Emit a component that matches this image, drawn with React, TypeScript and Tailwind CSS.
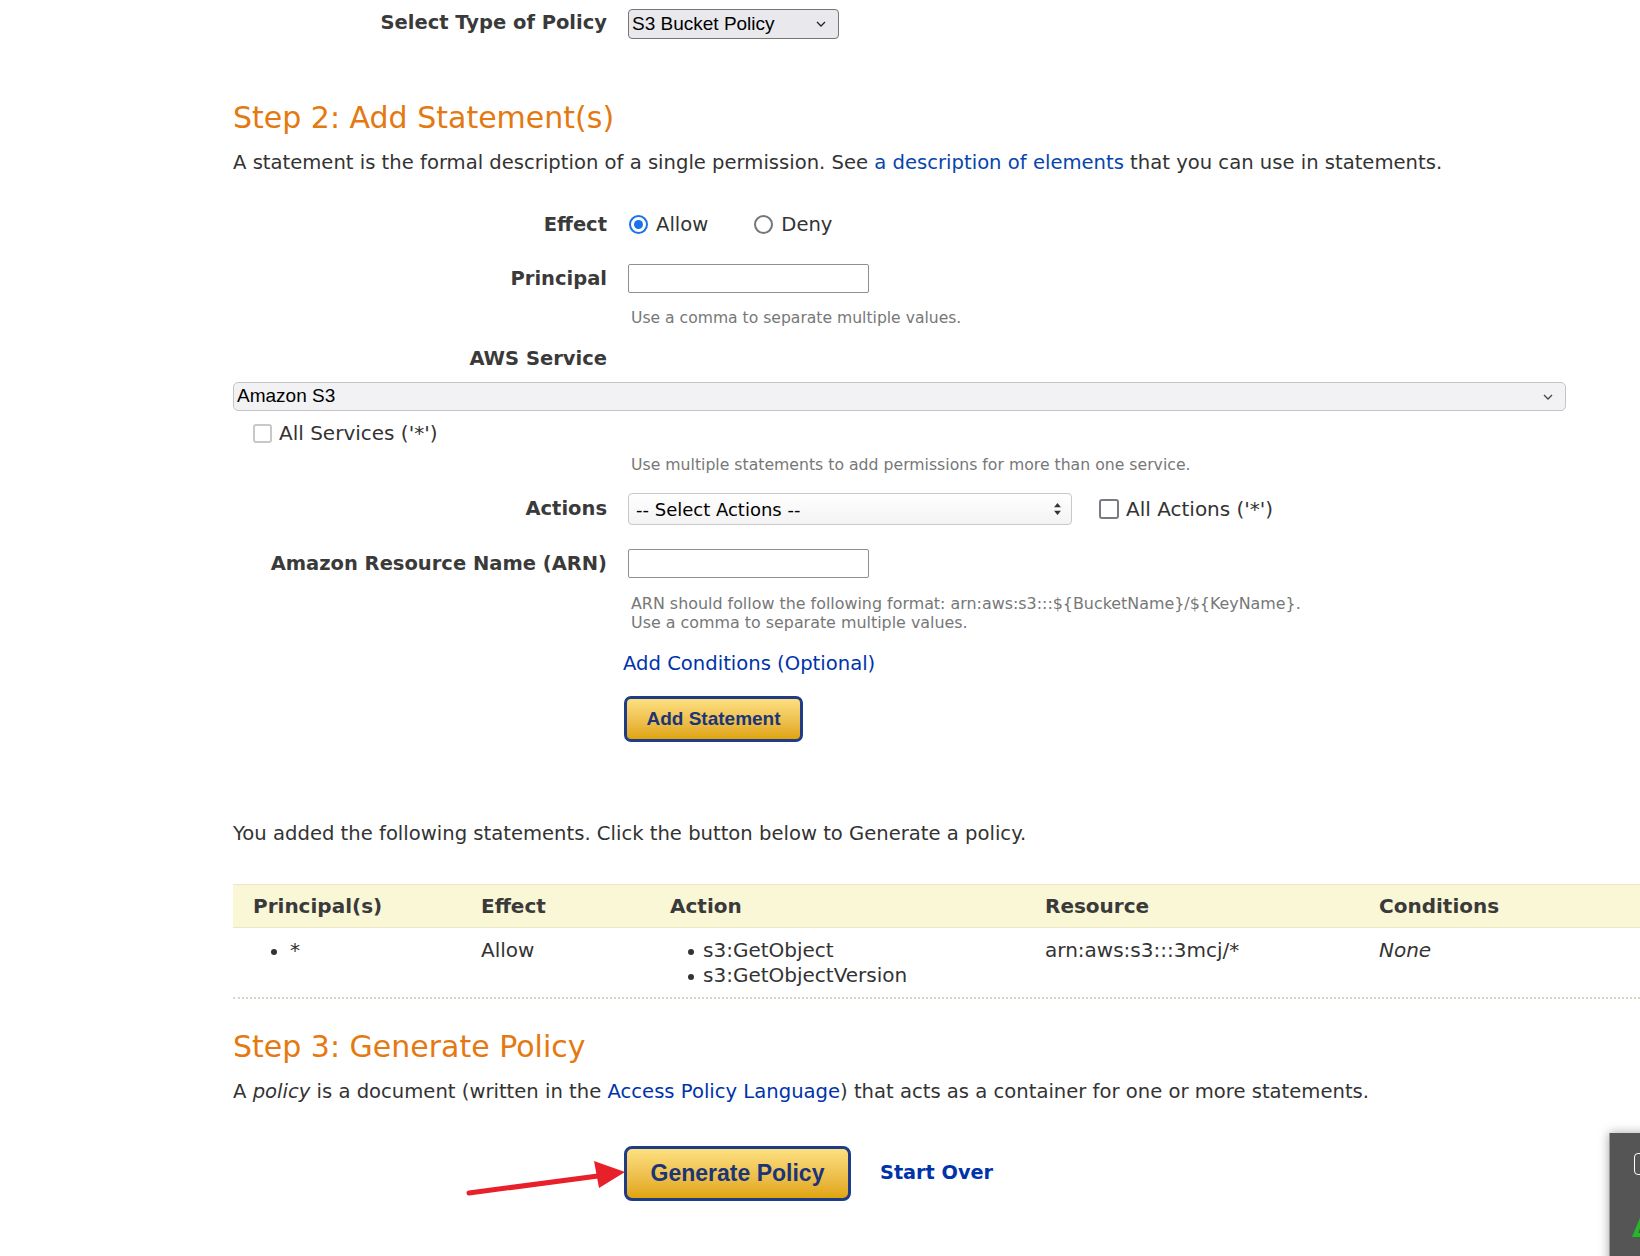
import React from "react";

const Chevron = ({ className }: { className?: string }) => (
  <svg viewBox="0 0 10 6" className={className} fill="none" stroke="currentColor" strokeWidth="1.3">
    <path d="M1 1 L5 5 L9 1" />
  </svg>
);

const Label = ({ children }: { children: React.ReactNode }) => (
  <div className="w-[374px] shrink-0 text-right font-bold text-[19.5px] leading-[24px] text-[#3a3a3a]">{children}</div>
);

const Dot = () => <span className="inline-block w-[6px] h-[6px] rounded-full bg-[#333] mt-[11px]" />;

export default function App() {
  return (
    <div className="relative w-[1640px] h-[1256px] overflow-hidden bg-white text-[#333] font-['DejaVu_Sans',sans-serif]">
      <div className="pl-[233px]">
        {/* Select type of policy */}
        <div className="flex items-start pt-[9px]">
          <div className="w-[374px] shrink-0 text-right font-bold text-[19.5px] leading-[28px] text-[#3a3a3a]">Select Type of Policy</div>
          <div className="ml-[21px] w-[211px] h-[30px] flex items-center justify-between pl-[3px] pr-[12px] bg-[#e9e9ed] border border-[#767676] rounded-[4px] font-['Liberation_Sans',sans-serif] text-[19px] text-black">
            <span>S3 Bucket Policy</span>
            <Chevron className="w-[10px] h-[6px] text-[#222]" />
          </div>
        </div>

        {/* Step 2 */}
        <h2 className="mt-[61px] text-[30px] leading-[36px] text-[#e47911] font-normal">Step 2: Add Statement(s)</h2>
        <p className="mt-[15px] text-[19.6px] leading-[24px]">
          A statement is the formal description of a single permission. See{" "}
          <a className="text-[#0645ad]">a description of elements</a> that you can use in statements.
        </p>

        {/* Effect */}
        <div className="mt-[35px] flex items-center h-[30px]">
          <Label>Effect</Label>
          <div className="ml-[21px] flex items-center text-[19.6px]">
            <span className="ml-[1px] w-[19px] h-[19px] rounded-full border-2 border-[#1a73e8] flex items-center justify-center">
              <span className="w-[9px] h-[9px] rounded-full bg-[#1a73e8]" />
            </span>
            <span className="ml-[8px]">Allow</span>
            <span className="ml-[46px] w-[19px] h-[19px] rounded-full border-2 border-[#767676] bg-white" />
            <span className="ml-[8px]">Deny</span>
          </div>
        </div>

        {/* Principal */}
        <div className="mt-[24px] flex items-center">
          <Label>Principal</Label>
          <div className="ml-[21px] w-[241px] h-[29px] border border-[#8f8f8f] rounded-[2px] bg-white" />
        </div>
        <div className="mt-[15px] pl-[398px] text-[15.6px] leading-[20px] text-[#777]">Use a comma to separate multiple values.</div>

        {/* AWS Service */}
        <div className="mt-[19px] flex">
          <Label>AWS Service</Label>
        </div>
        <div className="mt-[11px] w-[1333px] h-[29px] flex items-center justify-between pl-[3px] pr-[12px] bg-[#f2f2f4] border border-[#c4c4c4] rounded-[5px] font-['Liberation_Sans',sans-serif] text-[19px] text-black">
          <span>Amazon S3</span>
          <Chevron className="w-[10px] h-[6px] text-[#444]" />
        </div>
        <div className="mt-[10px] ml-[20px] flex items-center h-[24px] text-[20px]">
          <span className="w-[19px] h-[19px] border-2 border-[#c8c8c8] rounded-[3px] bg-white" />
          <span className="ml-[7px]">All Services ('*')</span>
        </div>
        <div className="mt-[10px] pl-[398px] text-[15.7px] leading-[20px] text-[#777]">Use multiple statements to add permissions for more than one service.</div>

        {/* Actions */}
        <div className="mt-[18px] flex items-center">
          <Label>Actions</Label>
          <div className="ml-[21px] w-[444px] h-[32px] flex items-center justify-between pl-[7px] pr-[10px] bg-gradient-to-b from-white to-[#f3f3f3] border border-[#c9c9c9] rounded-[4px] text-[18px] text-black">
            <span>-- Select Actions --</span>
            <svg viewBox="0 0 8 14" className="w-[7px] h-[12px] text-[#333]" fill="currentColor">
              <path d="M4 0 L8 5 L0 5 Z M4 14 L8 9 L0 9 Z" />
            </svg>
          </div>
          <span className="ml-[27px] w-[20px] h-[20px] border-2 border-[#7a7a82] rounded-[3px] bg-white" />
          <span className="ml-[7px] text-[20px]">All Actions ('*')</span>
        </div>

        {/* ARN */}
        <div className="mt-[24px] flex items-center">
          <Label>Amazon Resource Name (ARN)</Label>
          <div className="ml-[21px] w-[241px] h-[29px] border border-[#8f8f8f] rounded-[2px] bg-white" />
        </div>
        <div className="mt-[16px] pl-[398px] text-[15.9px] leading-[19px] text-[#777]">
          <div>ARN should follow the following format: arn:aws:s3:::${"{BucketName}"}/${"{KeyName}"}.</div>
          <div>Use a comma to separate multiple values.</div>
        </div>
        <div className="mt-[20px] pl-[390px] text-[19.6px] leading-[24px] text-[#0033aa]">Add Conditions (Optional)</div>
        <div className="mt-[20px] pl-[391px]">
          <div className="w-[179px] h-[46px] flex items-center justify-center rounded-[7px] border-[3px] border-[#1e3c87] bg-gradient-to-b from-[#fde07f] to-[#e0a500] font-['Liberation_Sans',sans-serif] font-bold text-[19px] text-[#1b3577]">
            Add Statement
          </div>
        </div>

        <p className="mt-[80px] text-[19.6px] leading-[24px]">You added the following statements. Click the button below to Generate a policy.</p>

        {/* Table */}
        <div className="mt-[38px]">
          <div className="flex h-[44px] items-center bg-[#faf7d7] border-y border-[#ece7c3] font-bold text-[20px] text-[#3a3a3a]">
            <div className="w-[228px] pl-[20px]">Principal(s)</div>
            <div className="w-[189px] pl-[20px]">Effect</div>
            <div className="w-[375px] pl-[20px]">Action</div>
            <div className="w-[334px] pl-[20px]">Resource</div>
            <div className="pl-[20px]">Conditions</div>
          </div>
          <div className="flex pt-[10px] pb-[9px] text-[20px] leading-[25px] border-b-2 border-dotted border-[#d8d5c0]">
            <div className="w-[228px] pl-[38px] flex items-start">
              <Dot />
              <span className="ml-[13px]">*</span>
            </div>
            <div className="w-[189px] pl-[20px]">Allow</div>
            <div className="w-[375px] pl-[38px]">
              <div className="flex items-start"><Dot /><span className="ml-[9px]">s3:GetObject</span></div>
              <div className="flex items-start"><Dot /><span className="ml-[9px]">s3:GetObjectVersion</span></div>
            </div>
            <div className="w-[334px] pl-[20px]">arn:aws:s3:::3mcj/*</div>
            <div className="pl-[20px] italic">None</div>
          </div>
        </div>

        {/* Step 3 */}
        <h2 className="mt-[30px] text-[30px] leading-[36px] text-[#e47911] font-normal">Step 3: Generate Policy</h2>
        <p className="mt-[15px] text-[19.6px] leading-[24px]">
          A <i>policy</i> is a document (written in the <a className="text-[#0033aa]">Access Policy Language</a>) that acts as a container for one or more statements.
        </p>
        <div className="mt-[42px] pl-[391px] flex items-center">
          <div className="w-[227px] h-[55px] flex items-center justify-center rounded-[8px] border-[3px] border-[#1e3c87] bg-gradient-to-b from-[#fde07f] to-[#e0a500] font-['Liberation_Sans',sans-serif] font-bold text-[23px] text-[#1b3577]">
            Generate Policy
          </div>
          <a className="ml-[29px] font-bold text-[19.3px] text-[#0033aa]">Start Over</a>
        </div>
      </div>

      {/* Red annotation arrow */}
      <svg className="absolute left-0 top-0 pointer-events-none" width="1640" height="1256">
        <line x1="469" y1="1193" x2="598" y2="1176" stroke="#e8202a" strokeWidth="5" strokeLinecap="round" />
        <polygon points="625,1172 594,1161 599,1188" fill="#e8202a" />
      </svg>

      {/* Bottom-right floating panel */}
      <div className="absolute left-[1609px] top-[1133px] w-[40px] h-[140px] bg-[#555] border-l border-[#999] shadow-[0_0_10px_rgba(0,0,0,0.35)]">
        <div className="absolute left-[24px] top-[20px] w-[14px] h-[22px] border border-white rounded-[4px]" />
        <svg className="absolute left-[20px] top-[78px]" width="20" height="26" viewBox="0 0 20 26">
          <path d="M2 26 L12 2 L20 2 L20 26 Z" fill="#22b82a" />
          <path d="M8 22 L13 10 L18 10 L18 22 Z" fill="#555" />
        </svg>
      </div>
    </div>
  );
}
